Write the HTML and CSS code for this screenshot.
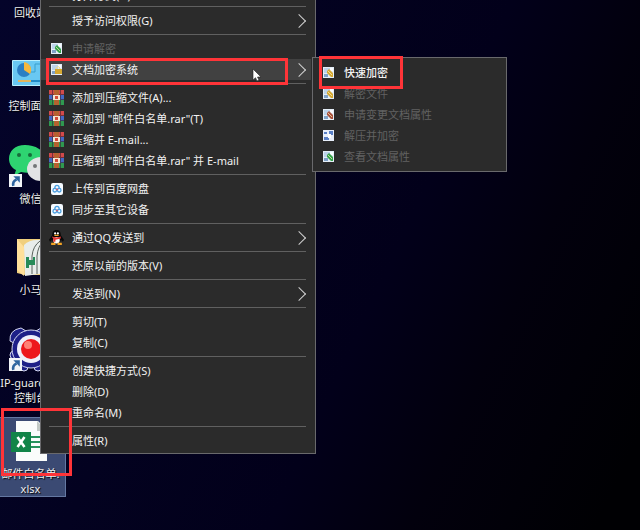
FILE: index.html
```
<!DOCTYPE html>
<html lang="zh-CN">
<head>
<meta charset="utf-8">
<title>桌面</title>
<link rel="stylesheet" href="styles.css">
</head>
<body>
<svg class="symbols" aria-hidden="true">
  <symbol id="doc" viewBox="0 0 11 11"><path fill="#e4eef8" d="M0 0h11v11H0z"/><path fill="#bcd3ea" d="M1 1h6v5H1z"/><path fill="#7fa2c8" d="M1 7h4v3H1z"/><path fill="#f8fbff" d="M7 1h3v3H7z"/></symbol>
  <symbol id="key" viewBox="0 0 11 11"><path d="M4 4l2-2 4 4v4H8L4 6z" fill="currentColor"/><path d="M5 4l4 4" stroke="#fff3bd" stroke-opacity=".7"/></symbol>
  <symbol id="lock" viewBox="0 0 11 11"><path d="M5 6V4q2-3 4 0v2" fill="none" stroke="#eedb8d"/><path d="M4 5h7v5H4z" fill="currentColor"/></symbol>
  <symbol id="rar" viewBox="0 0 15 15"><path fill="#d24a4a" d="M0 0h15v5H0z"/><path fill="#4569c4" d="M0 5h15v5H0z"/><path fill="#2f9950" d="M0 10h15v5H0z"/><path fill="#3a2030" d="M0 4h15v1H0zM0 9h15v1H0zM3 0h1v15H3zM11 0h1v15h-1z" opacity=".6"/><path fill="#b5622f" d="M5 0h5v15H5z"/><path fill="#f3e3d2" d="M4 5h7v5H4z"/><path fill="#d44a38" d="M6 6h3v3H6z"/></symbol>
  <symbol id="cloud" viewBox="0 0 12 12"><rect width="12" height="12" rx="2" fill="#f5faff"/><g fill="none" stroke="#4b9fe0" stroke-width="1.3"><path d="M3.8 5Q4 2.4 6 2.4T8.2 5"/><circle cx="3.8" cy="7.2" r="1.8"/><circle cx="8.2" cy="7.2" r="1.8"/></g><circle cx="6" cy="6.4" r=".9" fill="#df5261"/></symbol>
  <symbol id="qq" viewBox="0 0 14 14"><path fill="#080808" d="M7 0C4 0 3 2 3 5L0 9l1 2 2-2 1 3h6l1-3 2 2 1-2-3-4c0-3-1-5-4-5z"/><ellipse cx="7" cy="9.5" rx="3" ry="3" fill="#fff"/><circle cx="5.7" cy="3.2" r="1" fill="#fff"/><circle cx="8.3" cy="3.2" r="1" fill="#fff"/><path fill="#f4a323" d="M5 4.5h4v1.2H5zM2 12h4v2H2zM8 12h4v2H8z"/><path fill="#e73532" d="M3 6q4 2 8 0v2q-3 1-5 1v2H4V8L3 7z"/></symbol>
  <symbol id="shortcut" viewBox="0 0 12 12"><path fill="#f2f5f8" d="M0 0h12v12H0z"/><path d="M4 11Q3 7 7 5" fill="none" stroke="#2d649f" stroke-width="2.4"/><path fill="#2d649f" d="M4 2h6v6z"/></symbol>
</svg>

<main class="desktop">
  <section class="shortcuts" aria-label="桌面图标">
    <a class="shortcut recycle" href="#">回收站</a>
    <a class="shortcut control" href="#">
      <svg class="picture" viewBox="0 0 48 48"><path fill="#69c8f2" stroke="#b9effc" d="M5.500 13.500h38v25h-38z"/><circle cx="17" cy="23" r="7" fill="#2b7fc4"/><path fill="#f6b83d" d="M17 23v-8a8 8 0 0 1 6 12z"/><path fill="none" stroke="#3a9fcc" d="M24 25h4v-8h6v5h8"/><path stroke="#e2b65d" stroke-width="2" d="M11 34h13"/><path stroke="#218bc6" stroke-width="2" d="M24 34h17"/></svg>
      控制面板
    </a>
    <a class="shortcut wechat" href="#">
      <svg class="picture" viewBox="0 0 48 48"><path fill="#2ed471" d="M18 5C8 5 2 11 2 19c0 5 3 9 7 11l-2 6 7-4c14 3 24-4 24-13S28 5 18 5z"/><circle cx="12" cy="15" r="2" fill="#176c3b"/><circle cx="23" cy="15" r="2" fill="#176c3b"/><ellipse cx="34" cy="29" rx="14" ry="12" fill="#e2e3e4"/><circle cx="28" cy="26" r="2" fill="#747678"/><use href="#shortcut" x="2" y="34" width="13" height="13"/></svg>
      微信
    </a>
    <a class="shortcut folder" href="#">
      <svg class="picture" viewBox="0 0 48 48"><path fill="#f0cf7d" d="M10 8h32v36H18l-8-2z"/><path fill="#e8edeb" d="M17 14Q22 9 30 9h9v33l-21 3z"/><path fill="none" stroke="#59615c" d="M25 43V25q1-10 8-15M30 43V25q1-10 6-14"/><path fill="#278b59" d="M19 26h3v3h4v-3h2v8h-6v3h-3z"/><path fill="#ffe09a" d="M10 8l7 8v29l-7-6z"/></svg>
      小马
    </a>
    <a class="shortcut guard" href="#">
      <svg class="picture" viewBox="0 0 48 48"><g fill="#1d2088" stroke="#d4d8ef"><path d="M3 17Q2 6 14 4l5 3L7 19z"/><path d="M45 17Q46 6 34 4l-5 3 12 12z"/><circle cx="7" cy="31" r="4"/><circle cx="41" cy="31" r="4"/><circle cx="17" cy="43" r="4"/><circle cx="31" cy="43" r="4"/><circle cx="24" cy="25" r="19"/></g><circle cx="24" cy="25" r="14" fill="#eef0fb"/><circle cx="24" cy="25" r="10" fill="#ed171d"/><circle cx="21" cy="21" r="4" fill="#ff8076"/><use href="#shortcut" x="2" y="34" width="13" height="13"/></svg>
      <span class="name">IP-guard V3<br>控制台</span>
    </a>
    <a class="shortcut sheet" href="#">
      <svg class="picture" viewBox="0 0 48 48"><path fill="#fafcfb" d="M9 3h22l9 9v31H9z"/><path fill="#c2c9c5" d="M30 3l10 10H30z"/><path stroke="#26925c" stroke-width="2" d="M24 19h12M24 24h12M24 29h12"/><path fill="#118448" d="M4 14h20v20H4z"/><path d="M10.500 19l7 10M17.500 19l-7 10" stroke="#fff" stroke-width="2.600"/></svg>
      <span class="name">邮件白名单.<br>xlsx</span>
    </a>
  </section>

  <nav class="menu context" aria-label="右键菜单">
    <button class="item">打开方式(H)</button>
    <hr>
    <button class="item more">授予访问权限(G)</button>
    <hr>
    <button class="item" disabled><svg class="icon small green"><use href="#doc"/><use href="#key"/></svg>申请解密</button>
    <button class="item more active"><svg class="icon small gold"><use href="#doc"/><use href="#lock"/></svg>文档加密系统</button>
    <hr>
    <button class="item"><svg class="icon wide"><use href="#rar"/></svg>添加到压缩文件(A)...</button>
    <button class="item"><svg class="icon wide"><use href="#rar"/></svg>添加到 "邮件白名单.rar"(T)</button>
    <button class="item"><svg class="icon wide"><use href="#rar"/></svg>压缩并 E-mail...</button>
    <button class="item"><svg class="icon wide"><use href="#rar"/></svg>压缩到 "邮件白名单.rar" 并 E-mail</button>
    <hr>
    <button class="item"><svg class="icon"><use href="#cloud"/></svg>上传到百度网盘</button>
    <button class="item"><svg class="icon"><use href="#cloud"/></svg>同步至其它设备</button>
    <hr>
    <button class="item more"><svg class="icon wide"><use href="#qq"/></svg>通过QQ发送到</button>
    <hr>
    <button class="item">还原以前的版本(V)</button>
    <hr>
    <button class="item more">发送到(N)</button>
    <hr>
    <button class="item">剪切(T)</button>
    <button class="item">复制(C)</button>
    <hr>
    <button class="item">创建快捷方式(S)</button>
    <button class="item">删除(D)</button>
    <button class="item">重命名(M)</button>
    <hr>
    <button class="item">属性(R)</button>
  </nav>

  <nav class="menu submenu" aria-label="文档加密系统">
    <button class="item chosen"><svg class="icon small gold"><use href="#doc"/><use href="#key"/></svg>快速加密</button>
    <button class="item" disabled><svg class="icon small gold"><use href="#doc"/><use href="#key"/></svg>解密文件</button>
    <button class="item" disabled><svg class="icon small red"><use href="#doc"/><use href="#key"/></svg>申请变更文档属性</button>
    <button class="item" disabled><svg class="icon small" viewBox="0 0 11 11"><path fill="#e8effb" d="M0 0h11v11H0z"/><path fill="#5a80c7" d="M1 2h3v2H1zM6 1h4v4H6zM1 7h5v3H1z"/><path fill="#fff" d="M5 4h3v4H5z"/></svg>解压并加密</button>
    <button class="item" disabled><svg class="icon small green"><use href="#doc"/><use href="#key"/></svg>查看文档属性</button>
  </nav>

  <div class="mark mark-system"></div>
  <div class="mark mark-encrypt"></div>
  <div class="mark mark-file"></div>
  <svg class="cursor" viewBox="0 0 9 14"><path fill="#fff" stroke="#222" stroke-width=".6" d="M1 1v11l2.500-2.300L5 13l2-1-1.500-3H9z"/></svg>
</main>
</body>
</html>
```
FILE: styles.css
```
* { box-sizing: border-box; }

body {
  margin: 0;
  background: #020008;
  font: 11px/15px "Noto Sans", "Noto Sans CJK SC", sans-serif;
}

.symbols { position: absolute; width: 0; height: 0; }

.desktop {
  position: relative;
  min-height: 100vh;
  overflow: hidden;
  background: linear-gradient(115deg, #04042a 0%, #030220 35%, #02001a 58%, #02000d 74%, #000003 95%);
}

/* Desktop shortcuts sit on a free canvas */
.shortcut {
  position: absolute;
  left: -5px;
  width: 71px;
  display: flex;
  flex-direction: column;
  align-items: center;
  gap: 3px;
  color: #eee;
  text-align: center;
  text-decoration: none;
  white-space: nowrap;
  text-shadow: 1px 1px 1px #000;
}

.picture { width: 48px; height: 48px; }
.recycle { top: 5px; }
.control { top: 47px; }
.wechat { top: 140px; }
.folder { top: 231px; }
.guard { top: 324px; }
.sheet {
  top: 417px;
  height: 80px;
  background: #3b4a73;
  border: 1px solid #6478a2;
  gap: 0;
}

.menu {
  position: absolute;
  display: flex;
  flex-direction: column;
  background: #2b2b2b;
  border: 1px solid #69696c;
}

.context { top: -19px; left: 40px; width: 276px; padding-bottom: 2px; }
.submenu { top: 57px; left: 312px; width: 195px; padding: 4px 0; }

.menu hr {
  width: 257px;
  height: 1px;
  margin: 3px 8px;
  border: 0;
  background: #606060;
}

.item {
  position: relative;
  display: flex;
  align-items: center;
  height: 21px;
  padding: 0 0 0 31px;
  border: 0;
  background: none;
  color: #f2f2f2;
  font: inherit;
  text-align: left;
  white-space: nowrap;
}

.context > .item:first-child { align-items: flex-end; }

.item:disabled { color: #626262; }
.active { background: #414141; margin-right: 4px; }
.chosen { font-weight: 500; }

.icon {
  position: absolute;
  left: 10px;
  width: 12px;
  height: 12px;
}
.small { width: 11px; height: 11px; }
.wide { left: 8px; width: 15px; height: 15px; }
.gold { color: #d5a832; }
.red { color: #a9513c; }
.green { color: #35a34b; }

.more::after {
  content: "";
  position: absolute;
  right: 11px;
  width: 9px;
  height: 9px;
  border: solid #d0d0d0;
  border-width: 1px 1px 0 0;
  transform: rotate(45deg);
}
.active::after { right: 7px; }

.mark { position: absolute; border: 3px solid #ff3438; pointer-events: none; }
.mark-system { left: 46px; top: 58px; width: 242px; height: 27px; }
.mark-encrypt { left: 319px; top: 56px; width: 84px; height: 33px; }
.mark-file { left: 1px; top: 408px; width: 71px; height: 68px; }

.cursor { position: absolute; left: 252px; top: 68px; width: 9px; height: 14px; }
```
